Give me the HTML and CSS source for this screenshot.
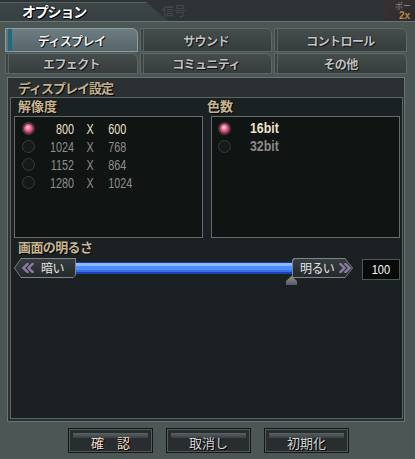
FILE: index.html
```html
<!DOCTYPE html>
<html lang="ja">
<head>
<meta charset="utf-8">
<title>オプション</title>
<link rel="stylesheet" href="styles.css">
</head>
<body>
<div class="window">
  <header class="titlebar">
    <div class="title-tab"><h1 class="title">オプション</h1></div>
    <span class="ghost">信号</span>
    <div class="corner-art"><span class="ca-top">ポー</span><span class="ca-bot">2x</span></div>
  </header>
  <nav class="tabs">
    <div class="tab active">ディスプレイ</div>
    <div class="tab">サウンド</div>
    <div class="tab">コントロール</div>
    <div class="tab">エフェクト</div>
    <div class="tab">コミュニティ</div>
    <div class="tab">その他</div>
  </nav>
  <section class="content">
    <h2 class="section-title">ディスプレイ設定</h2>
    <div class="panel">
      <div class="groups">
        <div class="group">
          <h3 class="group-label">解像度</h3>
          <div class="box">
            <div class="opt sel"><span class="radio"></span><span class="w">800</span><span class="x">X</span><span class="h">600</span></div>
            <div class="opt"><span class="radio"></span><span class="w">1024</span><span class="x">X</span><span class="h">768</span></div>
            <div class="opt"><span class="radio"></span><span class="w">1152</span><span class="x">X</span><span class="h">864</span></div>
            <div class="opt"><span class="radio"></span><span class="w">1280</span><span class="x">X</span><span class="h">1024</span></div>
          </div>
        </div>
        <div class="group">
          <h3 class="group-label shift">色数</h3>
          <div class="box box-right">
            <div class="opt2 sel"><span class="radio"></span><span class="bit">16bit</span></div>
            <div class="opt2"><span class="radio"></span><span class="bit">32bit</span></div>
          </div>
        </div>
      </div>
      <h3 class="group-label bright">画面の明るさ</h3>
      <div class="slider">
        <div class="sbtn sbtn-left">
          <div class="sbtn-in">
            <svg class="chev" width="12" height="10" viewBox="0 0 12 10"><polyline points="5.5,1 1.5,5 5.5,9"/><polyline points="10.5,1 6.5,5 10.5,9"/></svg>
            <span class="sbtn-text">暗い</span>
          </div>
        </div>
        <div class="track"><span class="thumb"></span></div>
        <div class="sbtn sbtn-right">
          <div class="sbtn-in">
            <span class="sbtn-text">明るい</span>
            <svg class="chev" width="12" height="10" viewBox="0 0 12 10"><polyline points="1.5,1 5.5,5 1.5,9"/><polyline points="6.5,1 10.5,5 6.5,9"/></svg>
          </div>
        </div>
        <div class="value"><span class="value-num">100</span></div>
      </div>
    </div>
  </section>
  <footer class="buttons">
    <button class="btn primary">確　認</button>
    <button class="btn">取消し</button>
    <button class="btn">初期化</button>
  </footer>
</div>
</body>
</html>
```
FILE: styles.css
```css
* { box-sizing: border-box; margin: 0; padding: 0; }
html, body { width: 415px; height: 459px; overflow: hidden; }
body {
  background: #4c5655;
  font-family: "Noto Sans CJK JP", "Noto Sans", sans-serif;
  color: #dddddd;
}
.window {
  width: 415px;
  height: 459px;
  display: flex;
  flex-direction: column;
}

/* title bar */
.titlebar {
  height: 22px;
  background: #2e3335;
  border-bottom: 1px solid #6a7575;
  display: flex;
  align-items: stretch;
}
.title-tab {
  width: 168px;
  clip-path: polygon(0 2px, 146px 2px, 100% 100%, 0 100%);
  background: linear-gradient(to bottom, #2e3335 0 2px, #56625f 2px 3px, #3d4547 3px, #364042);
  display: flex;
  align-items: center;
  padding-left: 22px;
}
.title {
  font-size: 14px;
  font-weight: 700;
  line-height: 1;
  color: #ffffff;
  letter-spacing: -1.2px;
  text-shadow: 1px 1px 0 #000, 0 0 2px #000;
}
.ghost {
  margin-left: -6px;
  font-size: 12px;
  line-height: 21px;
  color: #454c4e;
}
.corner-art {
  margin-left: auto;
  width: 30px;
  background: linear-gradient(135deg, #3a3132, #2c2a2c);
  display: flex;
  flex-direction: column;
  align-items: flex-end;
  padding: 1px 4px 0 0;
}
.ca-top {
  font-size: 8px;
  line-height: 9px;
  color: #9a9496;
}
.ca-bot {
  font-family: "Liberation Sans", sans-serif;
  font-size: 10px;
  font-weight: 700;
  line-height: 11px;
  color: #b88a3c;
  margin-right: 1px;
}

/* tabs */
.tabs {
  margin: 6px 0 0 5px;
  width: 402px;
  display: grid;
  grid-template-columns: 133px 132px 133px;
  grid-template-rows: 24px 21px;
  column-gap: 2px;
  row-gap: 1px;
}
.tab {
  display: flex;
  align-items: center;
  justify-content: center;
  border: 1px solid #5c6767;
  border-top-right-radius: 6px;
  background: linear-gradient(#454c4c, #373d3d);
  box-shadow: inset 2px 0 0 #3d4343, inset 3px 0 0 #5a6464;
  color: #c2c2c2;
  font-size: 12px;
  font-weight: 700;
  letter-spacing: -0.6px;
  text-shadow: 1px 1px 0 #111, 0 0 1px #111;
}
.tab.active {
  background: linear-gradient(#6d7d81, #566569);
  border-color: #8e9c9c;
  box-shadow: inset 2px 0 0 #64747a, inset 6px 0 0 #1f6a80;
  color: #f4f4f4;
}

/* content */
.content {
  margin: 3px 10px 0 7px;
  height: 345px;
  border: 1px solid #687372;
  background: #2b3133;
  display: flex;
  flex-direction: column;
}
.section-title {
  height: 19px;
  line-height: 19px;
  padding-left: 10px;
  font-size: 13px;
  font-weight: 700;
  letter-spacing: -1px;
  color: #c4b08a;
  text-shadow: 1px 1px 0 #000;
}
.panel {
  margin: 0 1px 2px 2px;
  height: 322px;
  border: 1px solid #5a6564;
  background: #1b2123;
  padding: 0 2px 0 3px;
}
.groups {
  display: grid;
  grid-template-columns: 1fr 1fr;
  column-gap: 8px;
}
.group-label {
  height: 18px;
  line-height: 16px;
  padding-left: 4px;
  font-size: 13px;
  font-weight: 700;
  color: #c9b58f;
  text-shadow: 1px 1px 0 #000;
}
.group-label.shift { margin-left: -8px; }
.group-label.bright { letter-spacing: -0.6px; line-height: 18px; }
.box {
  height: 122px;
  border: 1px solid #636d6c;
  background: #101413;
  padding: 2px 0 0 7px;
}
.box-right { padding-left: 6px; }

.opt {
  height: 18px;
  display: grid;
  grid-template-columns: 13px 39px 32px auto;
  align-items: center;
  font-family: "Liberation Sans", "Noto Sans", sans-serif;
  font-size: 15px;
  line-height: 1;
  color: #8e8e8e;
}
.opt .w, .opt .x, .opt .h { display: inline-block; transform: scaleX(0.72); }
.opt .w { text-align: right; transform-origin: right center; }
.opt .x { text-align: center; transform-origin: center center; }
.opt .h { padding-left: 3px; transform-origin: left center; }
.opt.sel { color: #ede1cc; }

.opt2 {
  height: 18px;
  display: flex;
  align-items: center;
  gap: 19px;
  font-family: "Liberation Sans", "Noto Sans", sans-serif;
  font-size: 14px;
  font-weight: 700;
  line-height: 1;
  color: #8a8a8a;
}
.opt2 .bit { display: inline-block; transform: scaleX(0.88); transform-origin: left center; }
.opt2.sel { color: #ede1cc; }

.radio {
  width: 13px;
  height: 13px;
  border-radius: 50%;
  background: #161a1a;
  border: 1px solid #363d3c;
}
.sel .radio {
  border: 2px solid #4c3a40;
  background: radial-gradient(circle at 45% 40%, #ffc4d6 0 12%, #f2648e 38%, #d33a66 68%, #8a2240 100%);
}

/* slider */
.slider {
  margin-top: 2px;
  height: 20px;
  display: flex;
  align-items: center;
}
.sbtn {
  height: 20px;
  background: #7c8685;
  padding: 1px;
}
.sbtn-in {
  height: 100%;
  display: flex;
  align-items: center;
  background: linear-gradient(#363c3f, #24292b);
}
.sbtn-left {
  width: 62px;
  clip-path: polygon(0 50%, 7px 0, 100% 0, 100% calc(100% - 3px), calc(100% - 3px) 100%, 7px 100%);
}
.sbtn-left .sbtn-in {
  clip-path: polygon(0 50%, 6px 0, 100% 0, 100% calc(100% - 2px), calc(100% - 2px) 100%, 6px 100%);
  padding-left: 7px;
  gap: 7px;
}
.sbtn-right {
  width: 61px;
  clip-path: polygon(2px 0, calc(100% - 8px) 0, 100% 50%, calc(100% - 8px) 100%, 0 100%, 0 2px);
}
.sbtn-right .sbtn-in {
  clip-path: polygon(2px 0, calc(100% - 7px) 0, 100% 50%, calc(100% - 7px) 100%, 0 100%, 0 2px);
  padding-left: 7px;
  gap: 5px;
}
.sbtn-text {
  font-size: 12px;
  line-height: 1;
  letter-spacing: -0.6px;
  color: #e6e6e6;
}
.chev polyline {
  fill: none;
  stroke: #8e7ca2;
  stroke-width: 2.4;
  stroke-linecap: square;
}
.track {
  flex: 1;
  height: 12px;
  position: relative;
  background: linear-gradient(#1b3b9c 0 1px, #8ab8ff 1px 4px, #4f8dff 4px 8px, #3470e8 8px 10px, #1d42b2 10px);
}
.thumb {
  position: absolute;
  right: -5px;
  top: 14px;
  width: 11px;
  height: 9px;
  z-index: 2;
  clip-path: polygon(50% 0, 100% 55%, 100% 100%, 0 100%, 0 55%);
  background: linear-gradient(#8c9090, #585c5c);
}
.value {
  margin-left: 9px;
  margin-top: 3px;
  width: 38px;
  height: 21px;
  background: #080a0a;
  border: 1px solid #4f5757;
  color: #ffffff;
  font-family: "Liberation Sans", sans-serif;
  font-size: 13px;
  line-height: 19px;
  text-align: center;
}
.value-num { display: inline-block; transform: scaleX(0.85); }

/* footer */
.buttons {
  margin-top: 6px;
  padding-left: 2px;
  display: flex;
  justify-content: center;
  gap: 13px;
}
.btn {
  width: 85px;
  height: 25px;
  border: 1px solid #141718;
  box-shadow: inset 0 0 0 1px #525a5a;
  background: linear-gradient(#5a6262, #3a4042) 4px 4px / calc(100% - 8px) 5px no-repeat, #282d2f;
  font-family: "Noto Sans CJK JP", sans-serif;
  font-size: 13px;
  line-height: 1;
  padding-top: 3px;
  color: #d2d2d2;
  text-shadow: 1px 1px 0 #000;
}
.btn.primary { color: #f6dcc6; }
```
